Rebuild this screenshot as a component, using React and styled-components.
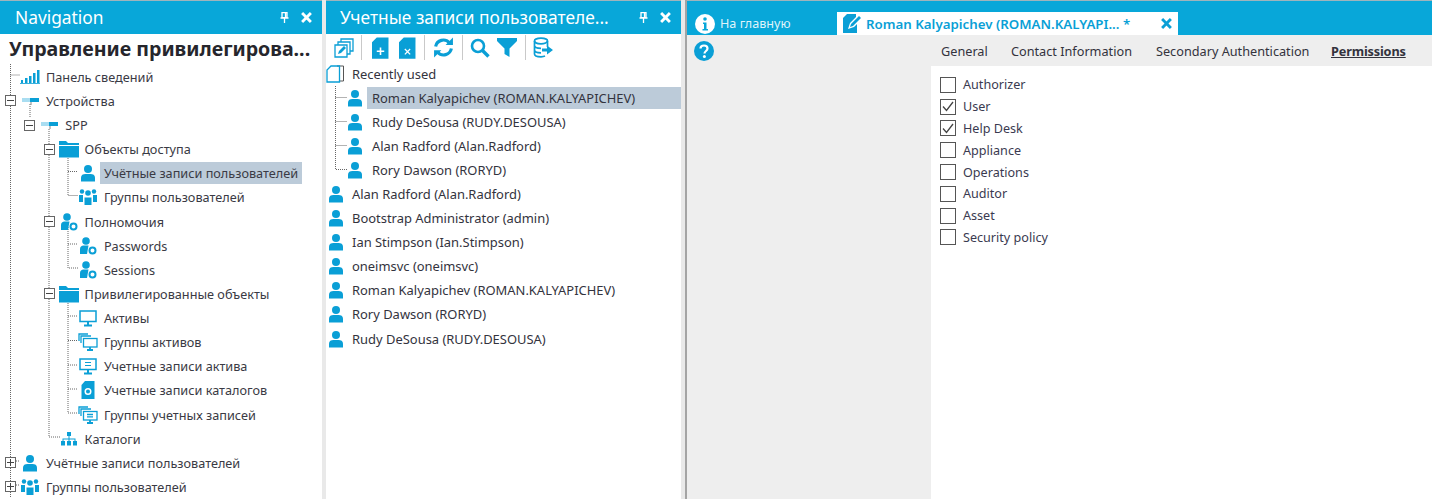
import React from "react";
import styled, { createGlobalStyle } from "styled-components";

const BLUE = "#08a7d9";
const ICON = "#0a9fd6";
const FONT = `"Noto Sans", "Open Sans", sans-serif`;

const Global = createGlobalStyle`
  html, body { margin: 0; padding: 0; height: 499px; overflow: hidden; background: #e9e9e9; }
  #root { height: 499px; }
  * { box-sizing: border-box; }
`;

const Page = styled.div`
  display: flex;
  width: 1432px;
  height: 499px;
  background: #e9e9e9;
  font-family: ${FONT};
  color: #3a3a44;
  overflow: hidden;
`;
const Panel = styled.section`
  width: ${(p) => p.$w}px;
  margin-right: ${(p) => p.$gap}px;
  flex: none;
  background: #fff;
  display: flex;
  flex-direction: column;
  overflow: hidden;
`;
const PanelHeader = styled.header`
  height: 34px;
  flex: none;
  background: ${BLUE};
  border-top: 1px solid #9fb4bc;
  color: #fff;
  display: flex;
  align-items: center;
  padding: 0 10px 1px ${(p) => p.$pl}px;
`;
const PanelTitle = styled.h2`
  margin: 0;
  flex: 1;
  font-size: 17.35px;
  font-weight: 400;
  white-space: nowrap;
`;
const PinSlot = styled.span`
  display: flex;
  margin-right: 12px;
`;
const SectionTitle = styled.h1`
  margin: 0;
  padding: 1px 0 0 9px;
  height: 33px;
  font-size: 19.6px;
  line-height: 28px;
  font-weight: 700;
  color: #26262c;
  white-space: nowrap;
`;
const Tree = styled.div`
  position: relative;
  flex: 1;
`;
const TreeGuides = styled.svg`
  position: absolute;
  left: 0;
  top: -67px;
  pointer-events: none;
`;
const ListGuides = styled.svg`
  position: absolute;
  left: 0;
  top: 0;
  pointer-events: none;
`;
const TreeRow = styled.div`
  height: 24.14px;
  display: flex;
  align-items: center;
  padding-left: ${(p) => 1 + p.$depth * 19.3}px;
`;
const ToggleSlot = styled.span`
  width: 19px;
  flex: none;
  display: flex;
  justify-content: center;
  position: relative;
`;
const Toggle = styled.span`
  width: 11px;
  height: 11px;
  background: #fff;
  border: 1px solid #666;
  position: relative;
  &::before {
    content: "";
    position: absolute;
    left: 1px; right: 1px; top: 4px;
    height: 1px;
    background: #444;
  }
  &::after {
    content: "";
    display: ${(p) => (p.$plus ? "block" : "none")};
    position: absolute;
    top: 1px; bottom: 1px; left: 4px;
    width: 1px;
    background: #444;
  }
`;
const IconSlot = styled.span`
  width: 20px;
  height: 20px;
  flex: none;
  display: flex;
  align-items: center;
  justify-content: center;
  color: ${ICON};
  position: relative;
`;
const Label = styled.span`
  margin-left: 2px;
  height: 22px;
  line-height: 22px;
  padding: 0 4px;
  font-size: 12.7px;
  white-space: nowrap;
  background: ${(p) => (p.$selected ? "#bccbd9" : "transparent")};
`;
const Toolbar = styled.div`
  height: 28px;
  flex: none;
  display: flex;
  align-items: center;
  padding: 0 0 1px 8px;
  color: ${ICON};
`;
const ToolButton = styled.span`
  width: ${(p) => p.$w}px;
  flex: none;
  display: flex;
  justify-content: center;
`;
const ToolSep = styled.span`
  width: 1px;
  height: 25px;
  background: #c9c9c9;
  flex: none;
  margin-left: ${(p) => p.$l}px;
`;
const ListArea = styled.div`
  position: relative;
  flex: 1;
`;
const ListRow = styled.div`
  height: 24.06px;
  display: flex;
  align-items: center;
  padding-left: ${(p) => (p.$child ? 19 : 0)}px;
`;
const ListLabel = styled.span`
  flex: ${(p) => (p.$selected ? 1 : "none")};
  height: 22px;
  line-height: 22px;
  padding-left: 5px;
  margin-left: ${(p) => (p.$child ? 2 : 1)}px;
  font-size: 12.95px;
  color: #33333d;
  white-space: nowrap;
  position: relative;
  background: ${(p) => (p.$selected ? "#bccbd9" : "transparent")};
`;
const ListIcon = styled.span`
  width: 20px;
  flex: none;
  display: flex;
  justify-content: center;
  color: ${ICON};
  position: relative;
`;
const RightPane = styled.main`
  flex: 1;
  min-width: 0;
  display: flex;
  flex-direction: column;
  border-left: 2px solid #a4a4a4;
  margin-left: -2px;
  background: #eee;
`;
const TabBar = styled.div`
  height: 35px;
  flex: none;
  background: ${BLUE};
  border-top: 1px solid #9fb4bc;
  display: flex;
  align-items: flex-end;
  padding-left: 8px;
`;
const HomeTab = styled.div`
  width: 142px;
  height: 23px;
  display: flex;
  align-items: center;
  gap: 5px;
  color: #dff3fa;
  font-size: 12.6px;
`;
const ActiveTab = styled.div`
  width: 341px;
  height: 23px;
  background: #fff;
  display: flex;
  align-items: center;
  padding: 0 6px 0 6px;
  color: ${ICON};
  font-size: 13.3px;
  font-weight: 600;
`;
const ActiveTabText = styled.span`
  flex: 1;
  margin-left: 5px;
  white-space: nowrap;
`;
const Body = styled.div`
  flex: 1;
  display: grid;
  grid-template-columns: 244px 1fr;
`;
const HelpColumn = styled.div`
  padding: 6px 0 0 7px;
`;
const Details = styled.div`
  display: flex;
  flex-direction: column;
`;
const SubNav = styled.nav`
  height: 31px;
  flex: none;
  display: flex;
  align-items: center;
  padding: 0 0 0 10px;
`;
const SubItem = styled.span`
  width: ${(p) => p.$w}px;
  flex: none;
  font-size: 12.7px;
  line-height: 18px;
  white-space: nowrap;
  color: #33333d;
  font-weight: ${(p) => (p.$active ? 700 : 400)};
  text-decoration: ${(p) => (p.$active ? "underline" : "none")};
  letter-spacing: ${(p) => (p.$active ? "-0.15px" : "0")};
`;
const CheckPanel = styled.div`
  flex: 1;
  background: #fff;
  padding: 8px 0 0 9px;
`;
const CheckRow = styled.label`
  height: 21.8px;
  display: flex;
  align-items: center;
  gap: 7px;
  font-size: 12.6px;
  color: #3a3a50;
`;
const Box = styled.span`
  width: 16px;
  height: 16px;
  border: 1.5px solid #555;
  background: #fff;
  display: flex;
  align-items: center;
  justify-content: center;
  flex: none;
`;

const Person = ({ s = 18 }) => (
  <svg width={s} height={s} viewBox="0 0 18 18" fill="currentColor">
    <circle cx="9" cy="5" r="4" />
    <path d="M2 17.500v-4C2 11 4 10 6.500 10h5c2.500 0 4.500 1 4.500 3.500v4z" />
  </svg>
);
const Users = () => (
  <svg width="20" height="18" viewBox="0 0 20 18" fill="currentColor">
    <circle cx="10" cy="5" r="2.800" />
    <circle cx="4" cy="3.500" r="2.200" />
    <circle cx="16" cy="3.500" r="2.200" />
    <path d="M6.500 9.500h7v7.500h-7zM1 7h4v7H1zM15 7h4v7h-4z" />
  </svg>
);
const Rights = () => (
  <svg width="20" height="20" viewBox="0 0 20 20" fill="currentColor">
    <circle cx="8" cy="5" r="3.800" />
    <path d="M2 18v-5c0-2 1.500-3.500 3.500-3.500h5L9 18z" />
    <circle cx="14.500" cy="14.500" r="3" fill="none" stroke="currentColor" strokeWidth="2" />
  </svg>
);
const Bars = () => (
  <svg width="20" height="14" viewBox="0 0 20 14" fill="currentColor">
    <path d="M1 10h2v3H1zM5 8h2.500v5H5zM9 6h2.500v7H9zM13 3h2.500v10H13zM17 0h2.500v13H17z" />
    <path d="M0 13.200h20v.8H0z" />
  </svg>
);
const Device = () => (
  <svg width="18" height="8" viewBox="0 0 18 8" fill="currentColor">
    <path d="M1 1h17v4H1z" opacity=".35" />
    <path d="M9 1h9v4H9z" />
    <path d="M9.500 5h1v3h-1z" fill="#888" />
  </svg>
);
const Folder = () => (
  <svg width="20" height="18" viewBox="0 0 20 18" fill="currentColor">
    <path d="M0 1h7l2 2h11v2H0z" />
    <path d="M0 6h20v11.500H0z" />
  </svg>
);
const Monitor = () => (
  <svg width="18" height="17" viewBox="0 0 18 17" fill="none" stroke="currentColor" strokeWidth="1.500">
    <rect x="1" y="1" width="16" height="10.500" />
    <path d="M9 11.500v3.500M5 15.500h8" strokeWidth="2" />
  </svg>
);
const MonitorStack = ({ lines }) => (
  <svg width="20" height="18" viewBox="0 0 20 18" fill="none" stroke="currentColor" strokeWidth="1.300">
    <path d="M1 8V1h9" />
    <path d="M3 10V3h10" />
    <rect x="5.500" y="5.500" width="13.500" height="8.500" fill="#fff" />
    {lines && <path d="M9 8.500h6M9 10.800h6" />}
    <path d="M12 14v2.500M9 17h6" strokeWidth="1.800" />
  </svg>
);
const MonitorLines = () => (
  <svg width="18" height="17" viewBox="0 0 18 17" fill="none" stroke="currentColor" strokeWidth="1.500">
    <rect x="1" y="1" width="16" height="10.500" />
    <path d="M6 4.500h6M6 7.500h6" strokeWidth="1.200" />
    <path d="M9 11.500v3.500M5 15.500h8" strokeWidth="2" />
  </svg>
);
const DirAccount = () => (
  <svg width="14" height="18" viewBox="0 0 14 18" fill="currentColor">
    <path fillRule="evenodd" d="M4 0h9.500v18H.5V4zM7 7a3.500 3.500 0 100 7 3.500 3.500 0 000-7zm0 1.500a2 2 0 110 4 2 2 0 010-4z" />
  </svg>
);
const Hierarchy = () => (
  <svg width="16" height="14" viewBox="0 0 16 14" fill="currentColor">
    <path d="M6 0h4v4H6zM0 9h4v4.500H0zM6 9h4v4.500H6zM12 9h4v4.500h-4z" />
    <path d="M7.500 4h1v2.500H14.500V9h-1V7.500h-5V9h-1V7.500h-5V9h-1V6.500h6z" />
  </svg>
);
const Pin = () => (
  <svg width="9" height="11" viewBox="0 0 9 11" fill="none" stroke="#fff" strokeWidth="1.300">
    <path d="M2 .7h5v5H2zM.5 6h8M4.500 6v5M5.500 1v4.500" />
  </svg>
);
const Close = ({ color = "#fff", s = 11 }) => (
  <svg width={s} height={s} viewBox="0 0 10 10" stroke={color} strokeWidth="2.600">
    <path d="M1 1l8 8M9 1L1 9" />
  </svg>
);
const CopyEdit = () => (
  <svg width="20" height="20" viewBox="0 0 20 20" fill="none" stroke="currentColor" strokeWidth="1.300">
    <path d="M7 4V1h12v12h-3" />
    <path d="M4 7V4h12v12h-3" />
    <path d="M1 7h12v12H1z" />
    <path d="M4 16l1-3 5-5 2 2-5 5z" fill="currentColor" stroke="none" />
  </svg>
);
const DocGlyph = ({ mark }) => (
  <svg width="17" height="22" viewBox="0 0 16 20" fill="currentColor">
    <path d="M4.500 0H15.500V20H0V4.500z" />
    {mark === "plus" ? (
      <path d="M8 9.500v7M4.500 13h7" stroke="#fff" strokeWidth="1.500" />
    ) : (
      <path d="M5.500 11l5 5M10.500 11l-5 5" stroke="#fff" strokeWidth="1.200" />
    )}
  </svg>
);
const Refresh = () => (
  <svg width="21" height="21" viewBox="0 0 20 20" fill="none" stroke="currentColor" strokeWidth="3">
    <path d="M2.500 9a7.500 7.500 0 0 1 13-3.500" />
    <path d="M17.500 11a7.500 7.500 0 0 1-13 3.500" />
    <path d="M12 7.500h7v-7z" fill="currentColor" stroke="none" />
    <path d="M8 12.500H1v7z" fill="currentColor" stroke="none" />
  </svg>
);
const Search = () => (
  <svg width="20" height="20" viewBox="0 0 20 20" fill="none" stroke="currentColor">
    <circle cx="8" cy="8" r="6" strokeWidth="2.600" />
    <path d="M12.500 12.500l6 6" strokeWidth="3.400" />
  </svg>
);
const Filter = () => (
  <svg width="20" height="19" viewBox="0 0 20 19" fill="currentColor">
    <path d="M0 0h20v3l-7.500 7.500V19l-5-3v-5.500L0 3z" />
  </svg>
);
const DbExport = () => (
  <svg width="20" height="21" viewBox="0 0 20 20" fill="none" stroke="currentColor" strokeWidth="1.700">
    <ellipse cx="8" cy="3.500" rx="6.500" ry="2.800" />
    <path d="M1.500 3.500v13c0 1.600 3 2.800 6.500 2.800 1.500 0 3-.2 4-.7M14.500 3.500v6M1.500 8c0 1.600 3 2.800 6.500 2.800M1.500 12.500c0 1.600 3 2.800 6.500 2.800" />
    <path d="M9 11h5V8l6 4.500-6 4.500v-3H9z" fill="currentColor" stroke="none" />
  </svg>
);
const Pages = () => (
  <svg width="20" height="18" viewBox="0 0 20 18" fill="none" stroke="currentColor" strokeWidth="1.300">
    <path d="M11 1h6.500v15H14" stroke="#555" strokeWidth="1" />
    <path d="M5 1h8.500v16H1V5z" />
  </svg>
);
const Info = () => (
  <svg width="20" height="20" viewBox="0 0 20 20">
    <circle cx="10" cy="10" r="10" fill="#fff" />
    <circle cx="10" cy="5" r="1.800" fill={BLUE} />
    <path d="M8 8.500h3.500V15H13v1.500H7.500V15H9v-5H8z" fill={BLUE} />
  </svg>
);
const Help = () => (
  <svg width="20" height="20" viewBox="0 0 20 20">
    <circle cx="10" cy="10" r="10" fill={ICON} />
    <path d="M6.500 7.500c0-2 1.500-3 3.500-3s3.500 1.200 3.500 3c0 2.500-3 2.500-3 5" fill="none" stroke="#fff" strokeWidth="2.200" />
    <circle cx="10.400" cy="15.500" r="1.500" fill="#fff" />
  </svg>
);
const EditDoc = () => (
  <svg width="18" height="19" viewBox="0 0 18 19" fill="currentColor">
    <path d="M4 0h9v3l-6 6-2 6 6-2 3-3v9H0V4z" />
    <path d="M8 10l8-8 2 2-8 8-3 1z" />
  </svg>
);
const Check = () => (
  <svg width="12" height="11" viewBox="0 0 12 11" fill="none" stroke="#444" strokeWidth="1.300">
    <path d="M1 5.500l3.500 4L11 1" />
  </svg>
);

const treeRows = [
  { d: 0, icon: <Bars />, text: "Панель сведений" },
  { d: 0, toggle: "minus", icon: <Device />, text: "Устройства" },
  { d: 1, toggle: "minus", icon: <Device />, text: "SPP" },
  { d: 2, toggle: "minus", icon: <Folder />, text: "Объекты доступа" },
  { d: 3, icon: <Person />, text: "Учётные записи пользователей", selected: true },
  { d: 3, icon: <Users />, text: "Группы пользователей" },
  { d: 2, toggle: "minus", icon: <Rights />, text: "Полномочия" },
  { d: 3, icon: <Rights />, text: "Passwords" },
  { d: 3, icon: <Rights />, text: "Sessions" },
  { d: 2, toggle: "minus", icon: <Folder />, text: "Привилегированные объекты" },
  { d: 3, icon: <Monitor />, text: "Активы" },
  { d: 3, icon: <MonitorStack />, text: "Группы активов" },
  { d: 3, icon: <MonitorLines />, text: "Учетные записи актива" },
  { d: 3, icon: <DirAccount />, text: "Учетные записи каталогов" },
  { d: 3, icon: <MonitorStack lines />, text: "Группы учетных записей" },
  { d: 2, icon: <Hierarchy />, text: "Каталоги" },
  { d: 0, toggle: "plus", icon: <Person />, text: "Учётные записи пользователей" },
  { d: 0, toggle: "plus", icon: <Users />, text: "Группы пользователей" },
];
const guidePaths = [
  "M10.500 66V499",
  "M10.500 77H20",
  "M30 106V120",
  "M49 131V439H60",
  "M68 156V197.500H78",
  "M68 173.500H78",
  "M68 229V270H78",
  "M68 246H78",
  "M68 301V415H78",
  "M68 318H78M68 342.500H78M68 367H78M68 391H78",
  "M16 463H20M16 487H20",
];
const recent = [
  { text: "Roman Kalyapichev (ROMAN.KALYAPICHEV)", selected: true },
  { text: "Rudy DeSousa (RUDY.DESOUSA)" },
  { text: "Alan Radford (Alan.Radford)" },
  { text: "Rory Dawson (RORYD)" },
];
const all = [
  "Alan Radford (Alan.Radford)",
  "Bootstrap Administrator (admin)",
  "Ian Stimpson (Ian.Stimpson)",
  "oneimsvc (oneimsvc)",
  "Roman Kalyapichev (ROMAN.KALYAPICHEV)",
  "Rory Dawson (RORYD)",
  "Rudy DeSousa (RUDY.DESOUSA)",
];
const perms = [
  ["Authorizer", false],
  ["User", true],
  ["Help Desk", true],
  ["Appliance", false],
  ["Operations", false],
  ["Auditor", false],
  ["Asset", false],
  ["Security policy", false],
];
const subTabs = [
  ["General", 70],
  ["Contact Information", 145],
  ["Secondary Authentication", 175],
  ["Permissions", 90, true],
];

export default function App() {
  return (
    <Page>
      <Global />
      <Panel $w={322} $gap={4}>
        <PanelHeader $pl={15}>
          <PanelTitle>Navigation</PanelTitle>
          <PinSlot><Pin /></PinSlot>
          <Close />
        </PanelHeader>
        <SectionTitle>Управление привилегирова...</SectionTitle>
        <Tree>
          <TreeGuides width="322" height="499">
            <path d={guidePaths.join(" ")} fill="none" stroke="#666" strokeDasharray="1 1" />
          </TreeGuides>
          {treeRows.map((r, i) => (
            <TreeRow key={i} $depth={r.d}>
              <ToggleSlot>{r.toggle && <Toggle $plus={r.toggle === "plus"} />}</ToggleSlot>
              <IconSlot>{r.icon}</IconSlot>
              <Label $selected={r.selected}>{r.text}</Label>
            </TreeRow>
          ))}
        </Tree>
      </Panel>
      <Panel $w={355} $gap={6}>
        <PanelHeader $pl={14}>
          <PanelTitle>Учетные записи пользователе...</PanelTitle>
          <PinSlot><Pin /></PinSlot>
          <Close />
        </PanelHeader>
        <Toolbar>
          <ToolButton $w={20}><CopyEdit /></ToolButton>
          <ToolSep $l={7} />
          <ToolButton $w={36}><DocGlyph mark="plus" /></ToolButton>
          <ToolButton $w={18}><DocGlyph mark="x" /></ToolButton>
          <ToolSep $l={8} />
          <ToolButton $w={36}><Refresh /></ToolButton>
          <ToolSep $l={1} />
          <ToolButton $w={34}><Search /></ToolButton>
          <ToolButton $w={20}><Filter /></ToolButton>
          <ToolSep $l={8} />
          <ToolButton $w={34}><DbExport /></ToolButton>
        </Toolbar>
        <ListArea>
          <ListGuides width="60" height="200">
            <path d="M9.500 24V107.500H21M9.500 35.500H21M9.500 59.500H21M9.500 83.500H21" fill="none" stroke="#666" strokeDasharray="1 1" />
          </ListGuides>
          <ListRow>
            <ListIcon><Pages /></ListIcon>
            <ListLabel>Recently used</ListLabel>
          </ListRow>
          {recent.map((r) => (
            <ListRow key={r.text} $child>
              <ListIcon><Person /></ListIcon>
              <ListLabel $child $selected={r.selected}>{r.text}</ListLabel>
            </ListRow>
          ))}
          {all.map((t) => (
            <ListRow key={t}>
              <ListIcon><Person /></ListIcon>
              <ListLabel>{t}</ListLabel>
            </ListRow>
          ))}
        </ListArea>
      </Panel>
      <RightPane>
        <TabBar>
          <HomeTab><Info /><span>На главную</span></HomeTab>
          <ActiveTab>
            <EditDoc />
            <ActiveTabText>Roman Kalyapichev (ROMAN.KALYAPI... *</ActiveTabText>
            <Close color={ICON} />
          </ActiveTab>
        </TabBar>
        <Body>
          <HelpColumn><Help /></HelpColumn>
          <Details>
            <SubNav>
              {subTabs.map(([t, w, a]) => (
                <SubItem key={t} $w={w} $active={a}>{t}</SubItem>
              ))}
            </SubNav>
            <CheckPanel>
              {perms.map(([t, c]) => (
                <CheckRow key={t}>
                  <Box>{c && <Check />}</Box>
                  {t}
                </CheckRow>
              ))}
            </CheckPanel>
          </Details>
        </Body>
      </RightPane>
    </Page>
  );
}
